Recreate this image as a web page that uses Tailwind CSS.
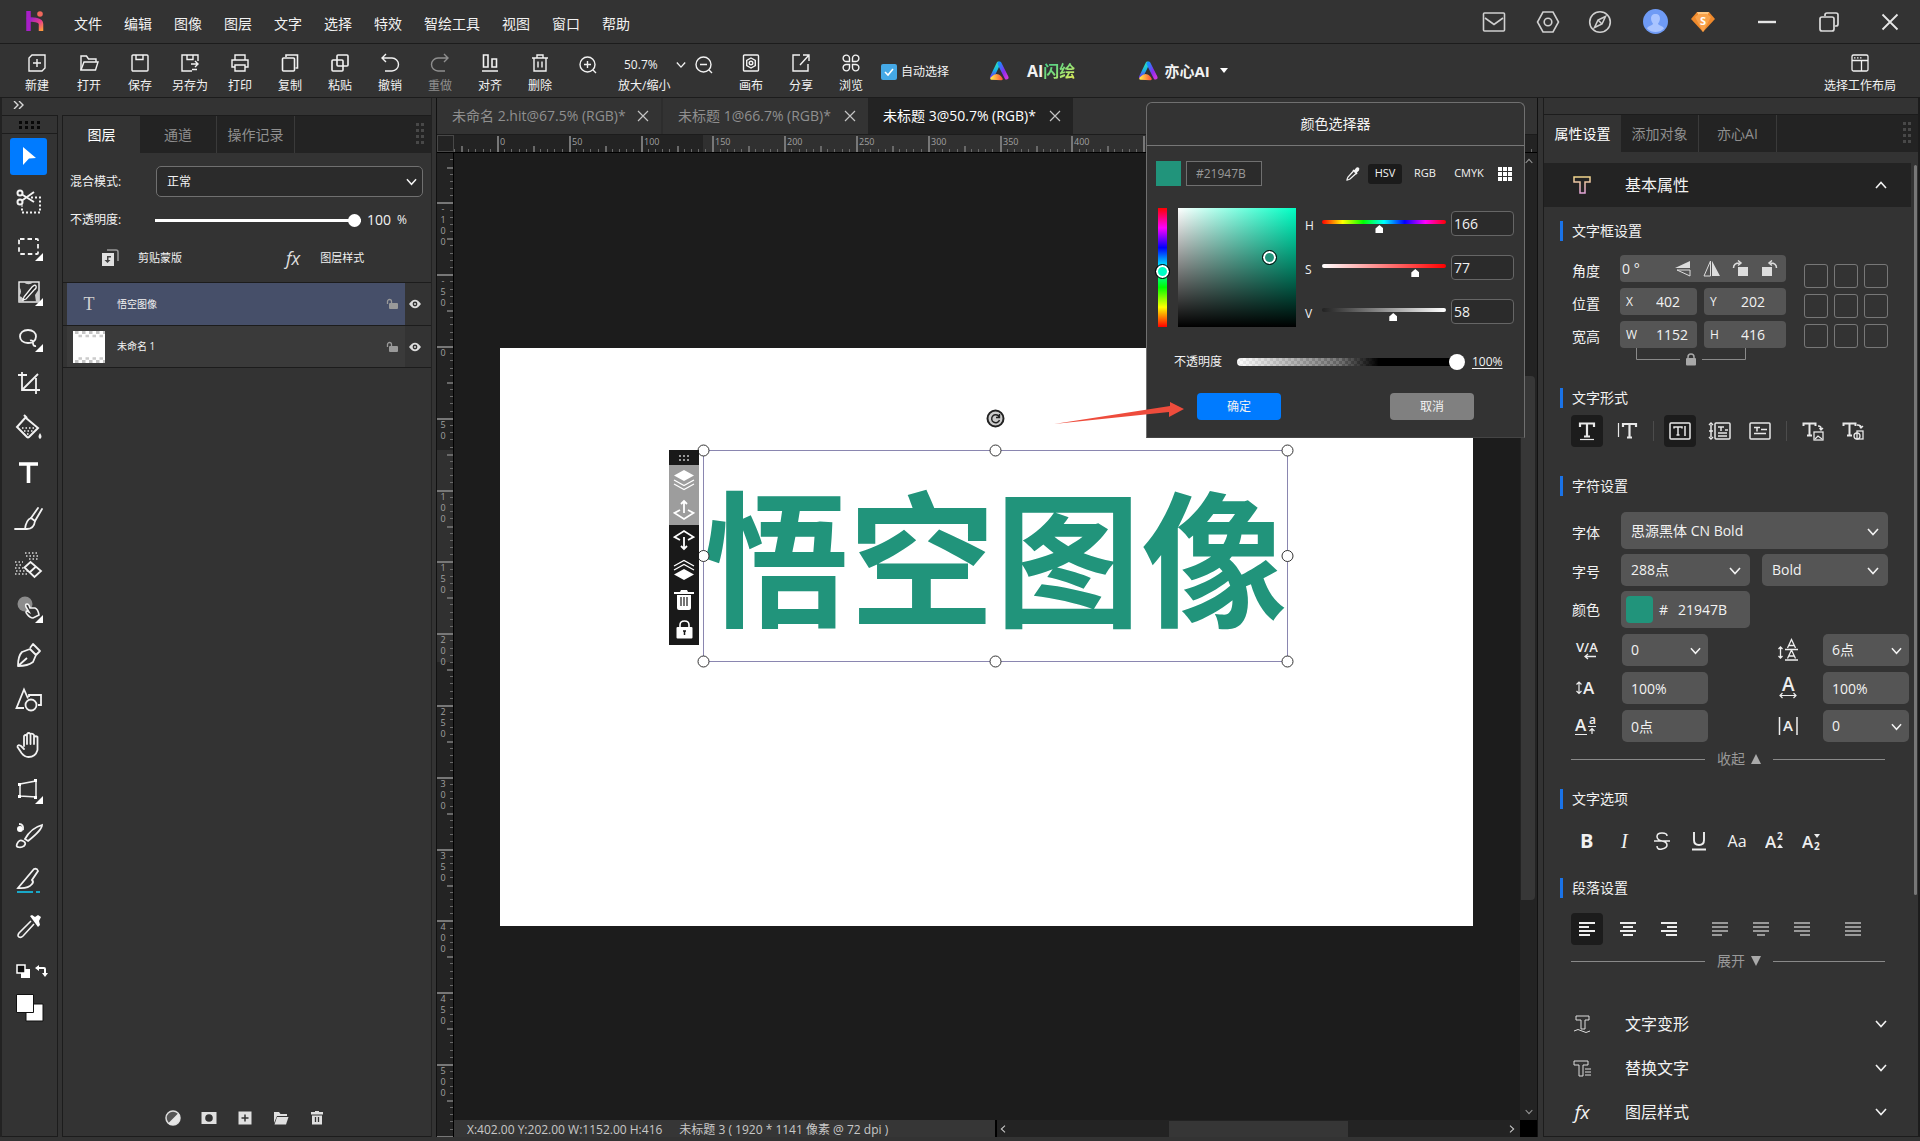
<!DOCTYPE html>
<html lang="zh-CN">
<head>
<meta charset="utf-8">
<title>未标题 3</title>
<script src="https://cdn.jsdelivr.net/npm/@tailwindcss/browser@4"></script>
</head>
<body class="flex h-screen flex-col overflow-hidden bg-[#333] font-['Open_Sans','Noto_Sans_CJK_SC',sans-serif] text-sm text-[#f2f2f2]">

<svg class="absolute h-0 w-0">
  <defs>
    <linearGradient id="ga" x1="0" y1="1" x2="0" y2="0"><stop offset="0" stop-color="#6a2ff5"/><stop offset=".5" stop-color="#18b6e8"/><stop offset="1" stop-color="#2fe0b8"/></linearGradient>
    <linearGradient id="gb" x1="0" y1="0" x2="1" y2="1"><stop offset="0" stop-color="#1590ff"/><stop offset=".6" stop-color="#8a2bf0"/><stop offset="1" stop-color="#c936e0"/></linearGradient>
    <linearGradient id="gc" x1="0" y1="0" x2="1" y2="0"><stop offset="0" stop-color="#ffe24a"/><stop offset="1" stop-color="#ff5c3c"/></linearGradient>
    <linearGradient id="gh" x1="0" y1="0" x2="1" y2="1"><stop offset="0" stop-color="#8a1fd0"/><stop offset=".55" stop-color="#e83a8c"/><stop offset="1" stop-color="#ff9a3c"/></linearGradient>
    <linearGradient id="gt" x1="0" y1="0" x2="0" y2="1"><stop offset="0" stop-color="#f0d48a"/><stop offset="1" stop-color="#e2a4d8"/></linearGradient>
  </defs>
  <symbol id="chev" viewBox="0 0 12 8"><path d="M1 1l5 5.500 5-5.500" fill="none" stroke="currentColor" stroke-width="1.600"/></symbol>
  <symbol id="x" viewBox="0 0 12 12"><path d="M1 1l10 10M11 1L1 11" fill="none" stroke="currentColor" stroke-width="1.200"/></symbol>
  <symbol id="grip" viewBox="0 0 10 24"><path d="M1 1h3v3H1zM6 1h3v3H6zM1 7h3v3H1zM6 7h3v3H6zM1 13h3v3H1zM6 13h3v3H6zM1 19h3v3H1zM6 19h3v3H6z" fill="currentColor"/></symbol>
  <symbol id="ai" viewBox="0 0 20 20">
    <path d="M9.500 2.500L3 16" stroke="url(#ga)" stroke-width="4" stroke-linecap="round"/>
    <path d="M10.500 2.500l7 14" stroke="url(#gb)" stroke-width="4" stroke-linecap="round"/>
    <path d="M2.500 17.500Q9 11 12.500 18z" stroke="url(#gc)" fill="url(#gc)" stroke-width="2.500" stroke-linejoin="round"/>
  </symbol>
  <symbol id="unlock" viewBox="0 0 12 12"><path d="M1.500 6V3.500a2 2 0 0 1 4 0V5" fill="none" stroke="currentColor" stroke-width="1.300"/><rect x="3" y="5" width="9" height="6" rx="1" fill="currentColor"/></symbol>
  <symbol id="eye" viewBox="0 0 12 10"><path d="M0 5q6-8.500 12 0q-6 8.500-12 0z" fill="currentColor"/><circle cx="6" cy="5" r="2.400" fill="#333"/><circle cx="6" cy="5" r="1" fill="currentColor"/></symbol>
</svg>

<!-- Title bar -->
<header class="flex h-11 shrink-0 items-center border-b border-[#1c1c1c] pl-6 pb-1.5">
  <svg class="mt-1 mr-[30px] h-7 w-5" viewBox="0 0 20 28"><path d="M3 13q5-1 9 0 5 1 5 4v7" fill="none" stroke="url(#gh)" stroke-width="4.500"/><path d="M4.500 4v20" stroke="#a81fc8" stroke-width="4.500"/><circle cx="16" cy="7" r="2.800" fill="#f0685c"/></svg>
  <nav class="mt-2 flex gap-[22px] pt-0.5 leading-5">
    <a href="#">文件</a><a href="#">编辑</a><a href="#">图像</a><a href="#">图层</a><a href="#">文字</a><a href="#">选择</a><a href="#">特效</a><a href="#">智绘工具</a><a href="#">视图</a><a href="#">窗口</a><a href="#">帮助</a>
  </nav>
  <div class="mt-1.5 mr-[21px] ml-auto flex items-center text-[#d0d0d0]">
    <button aria-label="消息" class="mr-[30px]"><svg class="h-6 w-6" viewBox="0 0 24 24" fill="none" stroke="currentColor" stroke-width="1.600"><rect x="1.500" y="3" width="21" height="18" rx="1"/><path d="M3 8l9 6.500L21 8"/></svg></button>
    <button aria-label="设置" class="mr-7"><svg class="h-6 w-6" viewBox="0 0 24 24" fill="none" stroke="currentColor" stroke-width="1.600"><path d="M7 2h10l5.500 10L17 22H7L1.500 12z"/><circle cx="12" cy="12" r="3.800"/></svg></button>
    <button aria-label="发现" class="mr-[31px]"><svg class="h-6 w-6" viewBox="0 0 24 24" fill="none" stroke="currentColor" stroke-width="1.600"><circle cx="12" cy="12" r="10.300"/><path d="M17.500 6.500l-3.500 7.500-7.500 3.500 3.500-7.500zM10 10l4 4"/></svg></button>
    <button aria-label="账户" class="mr-[23px]"><svg class="h-[25px] w-[25px]" viewBox="0 0 25 25"><circle cx="12.500" cy="12.500" r="12.500" fill="#6f9bf5"/><path d="M12.500 5c6 0 5 7 2.500 9.500 0 2 5 2 6 5a12 12 0 0 1-17 0c1-3 6-3 6-5C7.500 12 6.500 5 12.500 5z" fill="#a9c4ff"/></svg></button>
    <button aria-label="会员" class="mr-[42px]"><svg class="h-6 w-6" viewBox="0 0 24 24"><path d="M6 2h12l6 7-12 13L0 9z" fill="#f08a2c"/><path d="M6 2h12l-2 4H8z" fill="#ffc680"/><path d="M4 7l8 15 8-15-4-3H8z" fill="#f9a24b"/><text x="12" y="15" text-anchor="middle" font-size="11" font-weight="700" fill="#fff">S</text></svg></button>
    <button aria-label="最小化" class="mr-[42px]"><svg class="h-5 w-5" viewBox="0 0 20 20"><path d="M1 10h18" stroke="#e6e6e6" stroke-width="2.400"/></svg></button>
    <button aria-label="还原" class="mr-[42px]"><svg class="h-5 w-5" viewBox="0 0 20 20" fill="none" stroke="#dcdcdc" stroke-width="1.700"><rect x="1" y="5" width="14" height="14" rx="2"/><path d="M6 4V3q0-2 2-2h9q2 0 2 2v9q0 2-2 2h-1"/></svg></button>
    <button aria-label="关闭"><svg class="h-[18px] w-[18px] text-[#e6e6e6]"><use href="#x"/></svg></button>
  </div>
</header>

<!-- Command bar -->
<div class="flex h-[54px] shrink-0 items-start border-b border-[#1c1c1c] pt-[9px] text-xs leading-4">
  <div class="ml-3 flex [&_button]:flex [&_button]:w-[50px] [&_button]:flex-col [&_button]:items-center [&_button]:gap-[5px] [&_button]:whitespace-nowrap [&_svg]:h-5 [&_svg]:w-5">
    <button><svg viewBox="0 0 20 20" fill="none" stroke="currentColor" stroke-width="1.400"><path d="M5 2h13v13l-3 3H2V5z"/><path d="M10 6v8M6 10h8"/></svg>新建</button>
    <button class="ml-0.5"><svg viewBox="0 0 20 20" fill="none" stroke="currentColor" stroke-width="1.400"><path d="M2 17V3h5.500l2 3H17v3"/><path d="M2 17L5 9h14l-2.500 8z"/></svg>打开</button>
    <button class="ml-px"><svg viewBox="0 0 20 20" fill="none" stroke="currentColor" stroke-width="1.400"><rect x="2" y="2" width="16" height="16" rx="1"/><path d="M6 2v4.500h7V2"/></svg>保存</button>
    <button><svg viewBox="0 0 20 20" fill="none" stroke="currentColor" stroke-width="1.400"><path d="M18 8V2H2v16h10M7 2v4.500h6V2M11 11h7m-3-3l3 3-3 3M12 16.500h5"/></svg>另存为</button>
    <button><svg viewBox="0 0 20 20" fill="none" stroke="currentColor" stroke-width="1.400"><path d="M5 7V2h10v5"/><path d="M5 14H2V7h16v7h-3"/><path d="M5 12h10v6H5z"/></svg>打印</button>
    <button><svg viewBox="0 0 20 20" fill="none" stroke="currentColor" stroke-width="1.600"><rect x="2.500" y="5" width="12" height="13" rx="1"/><path d="M6 4V2h11.500v13h-2"/></svg>复制</button>
    <button><svg viewBox="0 0 20 20" fill="none" stroke="currentColor" stroke-width="1.600"><rect x="7" y="2" width="11" height="11" rx="1"/><rect x="2" y="7" width="11" height="11" rx="1"/></svg>粘贴</button>
    <button><svg viewBox="0 0 20 20" fill="none" stroke="currentColor" stroke-width="1.400"><path d="M6 1L2 5l4 4M2 5h10a6.300 6.300 0 0 1 0 13H5"/></svg>撤销</button>
    <button class="text-[#8e8e8e]"><svg viewBox="0 0 20 20" fill="none" stroke="currentColor" stroke-width="1.400"><path d="M14 1l4 4-4 4M18 5H8a6.300 6.300 0 0 0 0 13h7"/></svg>重做</button>
    <button><svg viewBox="0 0 20 20" fill="none" stroke="currentColor" stroke-width="1.600"><path d="M3.500 2h4.500v12H3.500zM12 6h4.500v8H12zM2 18h16"/></svg>对齐</button>
    <button><svg viewBox="0 0 20 20" fill="none" stroke="currentColor" stroke-width="1.400"><path d="M2 5h16M7 5V2h6v3M4 5v13h12V5M8 8.500v6M12 8.500v6"/></svg>删除</button>
  </div>
  <div class="ml-[13px] flex flex-col gap-[3px]">
    <div class="mt-0.5 flex h-5 items-center">
      <button aria-label="放大"><svg class="h-5 w-5" viewBox="0 0 20 20" fill="none" stroke="currentColor" stroke-width="1.400"><circle cx="9.500" cy="9.500" r="7.500"/><path d="M15 15l3 3M6 9.500h7M9.500 6v7"/></svg></button>
      <label class="ml-[26px] flex items-center"><input aria-label="缩放比例" value="50.7%" class="w-12 bg-transparent outline-none"><svg class="ml-1 h-2 w-2.5"><use href="#chev"/></svg></label>
      <button aria-label="缩小" class="ml-2"><svg class="h-5 w-5" viewBox="0 0 20 20" fill="none" stroke="currentColor" stroke-width="1.400"><circle cx="9.500" cy="9.500" r="7.500"/><path d="M15 15l3 3M6 9.500h7"/></svg></button>
    </div>
    <span class="ml-10">放大/缩小</span>
  </div>
  <div class="ml-3 flex [&_button]:flex [&_button]:w-[50px] [&_button]:flex-col [&_button]:items-center [&_button]:gap-[5px] [&_svg]:h-5 [&_svg]:w-5">
    <button><svg viewBox="0 0 20 20" fill="none" stroke="currentColor" stroke-width="1.400"><rect x="2.500" y="2" width="15" height="16" rx="1"/><path d="M10 5l4.300 2.500v5L10 15l-4.300-2.500v-5z"/><circle cx="10" cy="10" r="1.800"/></svg>画布</button>
    <button><svg viewBox="0 0 20 20" fill="none" stroke="currentColor" stroke-width="1.400"><path d="M9 2H2v16h15v-7M12 2h6v6M18 2l-9 10"/></svg>分享</button>
    <button><svg viewBox="0 0 20 20" fill="none" stroke="currentColor" stroke-width="1.400"><path d="M8.500 8.500H5.500a3.200 3.200 0 1 1 3-3zM11.500 8.500h3a3.200 3.200 0 1 0-3-3zM8.500 11.500H5.500a3.200 3.200 0 1 0 3 3zM11.500 11.500h3a3.200 3.200 0 1 1-3 3z"/></svg>浏览</button>
  </div>
  <label class="mt-[11px] ml-[5px] flex items-center gap-1">
    <span class="grid h-4 w-4"><input type="checkbox" checked class="col-start-1 row-start-1 h-4 w-4 appearance-none rounded-[2px] bg-[#45a9e6]"><svg class="pointer-events-none col-start-1 row-start-1 h-4 w-4" viewBox="0 0 16 16"><path d="M4 8l3 3 5-6" fill="none" stroke="#fff" stroke-width="1.600"/></svg></span>
    自动选择
  </label>
  <button class="mt-2 ml-10 flex items-center gap-[18px] text-base leading-5 font-bold"><svg class="h-5 w-5"><use href="#ai"/></svg><span class="flex">AI<span class="bg-linear-to-br from-[#35c987] via-[#7fe07a] to-[#f2ee4c] bg-clip-text text-transparent">闪绘</span></span></button>
  <button class="mt-2 ml-[63px] flex items-center gap-1.5 text-[15px] leading-5 font-bold"><svg class="h-5 w-5"><use href="#ai"/></svg>亦心AI<svg class="ml-1 h-1.5 w-2" viewBox="0 0 8 6"><path d="M0 0h8L4 5z" fill="#fff"/></svg></button>
  <button class="mr-6 ml-auto flex flex-col items-center gap-[5px]"><svg class="h-5 w-5" viewBox="0 0 20 20" fill="none" stroke="currentColor" stroke-width="1.300"><rect x="2" y="2" width="16" height="16" rx="1.500"/><path d="M2 7.500h16M11.500 7.500V18M4 4.800h1.500M7 4.800h1.500M10 4.800h1.500"/></svg>选择工作布局</button>
</div>

<main class="flex min-h-0 flex-1 pb-1">

  <!-- Tools and layers -->
  <section class="flex w-[432px] shrink-0 flex-col border-r border-l-2 border-[#222]">
    <div class="flex h-[17px] items-center pl-[11px]"><button aria-label="展开工具栏"><svg class="-mt-1 h-2 w-3" viewBox="0 0 12 8"><path d="M1 0l4 4-4 4M6 0l4 4-4 4" fill="none" stroke="#d8d8d8" stroke-width="1.400"/></svg></button></div>
    <div class="flex min-h-0 flex-1 gap-1">
      <aside class="flex w-[56px] flex-col border border-l-0 border-[#1c1c1c]">
        <div class="flex h-[18px] items-center justify-center border-b border-[#1c1c1c]"><svg class="h-2 w-[22px]" viewBox="0 0 22 8"><path d="M0 0h3v3H0zM6 0h3v3H6zM12 0h3v3h-3zM18 0h3v3h-3zM0 5h3v3H0zM6 5h3v3H6zM12 5h3v3h-3zM18 5h3v3h-3z" fill="#080808"/></svg></div>
        <div class="mt-1 flex h-[807px] flex-col items-center justify-between pr-0.5 [&>button]:grid [&>button]:h-[37px] [&>button]:w-[37px] [&>button]:place-items-center [&>button>svg]:h-[30px] [&>button>svg]:w-[30px]">
          <button aria-label="移动" class="rounded-[3px] bg-[#007bff]"><svg viewBox="0 0 30 30"><path d="M9 5l13 11-7 .5L9 23z" fill="#fff"/></svg></button>
          <button aria-label="抠图"><svg viewBox="0 0 30 30" fill="none" stroke="#f2f2f2" stroke-width="2"><circle cx="6" cy="6" r="2.500"/><circle cx="6" cy="15" r="2.500"/><path d="M8 7.500l12 7.500M8 13.500L20 5"/><path d="M17 10.500h9v15H8v-7" stroke-dasharray="2 2"/></svg></button>
          <button aria-label="选框"><svg viewBox="0 0 30 30"><rect x="5" y="7" width="19" height="15" rx="1" fill="none" stroke="#f2f2f2" stroke-width="1.800" stroke-dasharray="4.500 3"/><path d="M29 21v8h-8z" fill="#fff"/></svg></button>
          <button aria-label="调整"><svg viewBox="0 0 30 30"><rect x="5" y="5" width="20" height="20" fill="none" stroke="#f2f2f2" stroke-width="1.400"/><path d="M10 5a5 4 0 0 0 9 0zM5 10a6 6 0 0 1 0 9zM5 19q5 1 5 6H5zM25 12l-4 6 1 7h3z" fill="#ccc"/><path d="M10 20l8-10q3-3 4-1t-2 4l-8 9-3 1z" fill="#222" stroke="#f2f2f2" stroke-width="1.300"/><path d="M29 21v8h-8z" fill="#fff"/></svg></button>
          <button aria-label="套索"><svg viewBox="0 0 30 30"><path d="M18 19.500q-2 .5-4 .500c-5 0-8-3-8-6.500s3-6.500 8-6.500 8 3 8 6.500q0 3-2.500 5m-3.500-1q3-1 3 2.500t3 3" fill="none" stroke="#f2f2f2" stroke-width="1.800"/><path d="M29 21v8h-8z" fill="#fff"/></svg></button>
          <button aria-label="裁剪"><svg viewBox="0 0 30 30" fill="none" stroke="#f2f2f2" stroke-width="1.800"><path d="M4 7h9M8 4v18h18M22 10v16M8 22L24 6"/></svg></button>
          <button aria-label="填充"><svg viewBox="0 0 30 30"><path d="M12 4L3 14l10 10q1 1 2 0l9-9L12 5M10 2l3 3" fill="none" stroke="#f2f2f2" stroke-width="2"/><path d="M8 15h13M10 18h9M13 21h3" stroke="#f2f2f2" stroke-width="1.500" stroke-dasharray="1.500 2"/><path d="M26 20q3 4 0 6q-3-2 0-6z" fill="#f2f2f2"/></svg></button>
          <button aria-label="文字"><svg viewBox="0 0 30 30"><path d="M5 6h19M14.500 6v19" stroke="#fff" stroke-width="3.600"/></svg></button>
          <button aria-label="画笔"><svg viewBox="0 0 30 30" fill="none" stroke="#f2f2f2" stroke-width="1.800" stroke-linecap="round"><path d="M1 25h12q7 0 8-8l-4-3q-5 2-6 11"/><path d="M17 14l7-10M21 17l7-12"/></svg></button>
          <button aria-label="橡皮"><svg viewBox="0 0 30 30"><path d="M11 4h14M12 7h12M15 10h10M1 13h8M2 16h7M1 19h11M2 22h12M1 25h14" stroke="#d8d8d8" stroke-width="1.500" stroke-dasharray="1.500 2"/><path d="M10.500 18.500l6-5.500L27 22l-6.500 6zM21.500 18l-6 5.500" fill="#333" stroke="#f2f2f2" stroke-width="1.800"/></svg></button>
          <button aria-label="涂抹"><svg viewBox="0 0 30 30"><circle cx="11" cy="10" r="7.500" fill="#8c8c8c"/><path d="M12 13q-1-3 1-3t3 4l5 0q3 1 4 7l-6 3q-3 0-6-4-2-2 0-3l2 1z" fill="#333" stroke="#f2f2f2" stroke-width="1.600"/><path d="M29 21v8h-8z" fill="#fff"/></svg></button>
          <button aria-label="钢笔"><svg viewBox="0 0 30 30" fill="none" stroke="#f2f2f2" stroke-width="1.800" stroke-linejoin="round"><path d="M4 26q0-10 4-14l8-3 6 6-3 7q-5 4-15 4zM4 26l9-8M16 8l3-4 7 7-4 4"/></svg></button>
          <button aria-label="形状"><svg viewBox="0 0 30 30" fill="none" stroke="#f2f2f2" stroke-width="1.800"><circle cx="17" cy="20" r="5.500"/><path d="M10 23H2.500L10 4.500l4 9M15 12v-2h12v10h-3"/></svg></button>
          <button aria-label="抓手"><svg viewBox="0 0 30 30" fill="none" stroke="#f2f2f2" stroke-width="1.800" stroke-linecap="round" stroke-linejoin="round"><path d="M10 16V6q1.700-2 3 0v8M13 6V4q1.700-2 3.500 0v10M16.500 4q2-1 3.500 1v9M20 7q2-1.500 3.500 0v13q-2 7-9 7-4 0-7-4l-4-6q0-3 3.500-1L10 19"/></svg></button>
          <button aria-label="变换"><svg viewBox="0 0 30 30"><path d="M6 9l16-3v16L6 21z" fill="none" stroke="#f2f2f2" stroke-width="1.500"/><path d="M4 8h3v3H4zM20 4h3v3h-3zM20 21h3v3h-3zM4 20h3v3H4zM29 21v8h-8z" fill="#fff"/></svg></button>
          <button aria-label="修复画笔"><svg viewBox="0 0 30 30" fill="none" stroke="#f2f2f2" stroke-width="1.800"><circle cx="6" cy="8" r="3" fill="#fff" stroke="none"/><path d="M5 3q5 0 4 6"/><path d="M11 18q6-11 17-14 0 5-14 16zM3 23q2-5 6-3t1 5q-3 2-6 1-2 0-1-3z"/></svg></button>
          <button aria-label="切片"><svg viewBox="0 0 30 30" fill="none" stroke="#f2f2f2" stroke-width="1.800"><path d="M4 22L20 3q3-1 4 2l-6 9q2 2 0 4-4 5-14 4z"/><path d="M3 26h16M22 26h4" stroke="#19a8c8" stroke-width="2"/></svg></button>
          <button aria-label="吸管"><svg viewBox="0 0 30 30"><path d="M17 10L5 22q-2 3 0 4t4-1l11-12" fill="none" stroke="#f2f2f2" stroke-width="1.600"/><path d="M16 5l2-1 3 2 3-2 3 2-2 4 1 4-2 2z" fill="#fff"/></svg></button>
        </div>
        <div class="mt-[19px] ml-3.5 flex gap-1 text-white">
          <button aria-label="默认颜色"><svg class="h-[15px] w-[15px]" viewBox="0 0 15 15"><path d="M5 5h9v9H5z" fill="#fff"/><path d="M1 1h8v8H1z" fill="#111" stroke="#fff" stroke-width="1.500"/></svg></button>
          <button aria-label="交换颜色"><svg class="h-[13px] w-[13px]" viewBox="0 0 13 13"><path d="M3 3h6q1 0 1 1v5" fill="none" stroke="#fff" stroke-width="2"/><path d="M4 0v6L0 3zM7 8h6l-3 4z" fill="#fff"/></svg></button>
        </div>
        <button aria-label="前景色与背景色" class="mt-[15px] ml-3.5 h-7 w-7"><svg class="h-7 w-7" viewBox="0 0 28 28"><path d="M10 10h17v17H10z" fill="#fff" stroke="#111"/><path d="M.5.500h17v18h-17z" fill="#fff" stroke="#111"/></svg></button>
      </aside>

      <aside class="flex min-w-0 flex-1 flex-col border border-r-0 border-[#1c1c1c]">
        <div role="tablist" class="flex h-[37px] shrink-0 bg-[#232323] text-[#8f8f8f]">
          <button role="tab" class="w-[77px] bg-[#333] text-white">图层</button>
          <button role="tab" class="w-[77px] border-r border-[#3a3a3a]">通道</button>
          <button role="tab" class="w-[78px] border-r border-[#3a3a3a]">操作记录</button>
          <svg class="mt-1.5 mr-1.5 ml-auto h-6 w-2.5 text-[#484848]"><use href="#grip"/></svg>
        </div>
        <div class="mt-[13px] flex items-center pl-[7px] text-xs">
          <label for="blend" class="w-[86px]">混合模式:</label>
          <span class="relative"><select id="blend" class="h-[31px] w-[267px] appearance-none rounded-[5px] border border-[#707070] bg-[#2b2b2b] px-2.5"><option>正常</option></select><svg class="pointer-events-none absolute top-3 right-1.5 h-2 w-[11px]"><use href="#chev"/></svg></span>
        </div>
        <div class="mt-2.5 flex h-[26px] items-center pl-[7px] text-xs">
          <label for="op" class="w-[85px]">不透明度:</label>
          <input id="op" type="range" value="100" class="h-3 w-[206px] appearance-none bg-transparent [&::-webkit-slider-runnable-track]:h-[3px] [&::-webkit-slider-runnable-track]:bg-white [&::-webkit-slider-thumb]:-mt-[5px] [&::-webkit-slider-thumb]:h-[13px] [&::-webkit-slider-thumb]:w-[13px] [&::-webkit-slider-thumb]:appearance-none [&::-webkit-slider-thumb]:rounded-full [&::-webkit-slider-thumb]:bg-white">
          <input aria-label="不透明度数值" value="100" class="ml-[6px] w-[30px] bg-transparent text-sm outline-none">%
        </div>
        <div class="mt-[13px] flex h-6 items-center text-[11px]">
          <button class="ml-[38px] flex items-center gap-[19px]"><svg class="h-[18px] w-[18px]" viewBox="0 0 18 18"><path d="M6 1h9q2 0 2 2v9" fill="none" stroke="#999" stroke-width="1.500"/><rect x="1" y="4" width="12" height="13" fill="#e0e0e0"/><path d="M6 7h4v1.500H7.500V11h2L6.500 14 3.500 11H6z" fill="#444"/></svg>剪贴蒙版</button>
          <button class="ml-[104px] flex items-center gap-5"><span class="text-[18px] leading-5 text-[#ddd] italic">fx</span>图层样式</button>
        </div>
        <ul class="mt-3 border-y border-[#1c1c1c] text-[10px]">
          <li class="flex h-[43px] items-center border-b border-[#1c1c1c]">
            <div class="ml-1 flex h-full w-[338px] items-center bg-[#464f69]">
              <span class="ml-1.5 w-8 text-center font-['Liberation_Serif'] text-lg text-[#d0d0d0]">T</span><span class="ml-3 flex-1">悟空图像</span>
              <button aria-label="锁定" class="mr-[7px]"><svg class="h-3 w-3 text-[#999]"><use href="#unlock"/></svg></button>
            </div>
            <button aria-label="可见" class="ml-1"><svg class="h-2.5 w-3 text-[#ddd]"><use href="#eye"/></svg></button>
          </li>
          <li class="flex h-[41px] items-center">
            <div class="ml-1 flex h-full w-[338px] items-center bg-[#3a3a3a]">
              <svg class="ml-1.5 h-8 w-8" viewBox="0 0 32 32"><path d="M0 0h32v32H0z" fill="#fff"/><path d="M2 1.500h30M2 30.500h30" stroke="#c4c4c4" stroke-width="3" stroke-dasharray="3.500 3.500"/><path d="M5.500 5h26.500M5.500 27.500h26.500" stroke="#ccc" stroke-width="2.500" stroke-dasharray="3.500 3.500"/></svg>
              <span class="ml-3 flex-1">未命名 1</span>
              <button aria-label="锁定" class="mr-[7px]"><svg class="h-3 w-3 text-[#999]"><use href="#unlock"/></svg></button>
            </div>
            <button aria-label="可见" class="ml-1"><svg class="h-2.5 w-3 text-[#ddd]"><use href="#eye"/></svg></button>
          </li>
        </ul>
        <div class="mt-auto mr-1 mb-2.5 flex justify-center gap-5 [&_svg]:h-4 [&_svg]:w-4">
          <button aria-label="调整图层"><svg viewBox="0 0 16 16"><circle cx="8" cy="8" r="7" fill="#555" stroke="#ddd" stroke-width="1.500"/><path d="M13.500 3A7.500 7.500 0 0 1 3 13.500z" fill="#e6e6e6"/></svg></button>
          <button aria-label="蒙版"><svg viewBox="0 0 16 16"><path d="M.5 2h15v12H.5z" fill="#e0e0e0"/><circle cx="8" cy="8" r="3.800" fill="#333"/></svg></button>
          <button aria-label="新建图层"><svg viewBox="0 0 16 16"><path d="M1.500 1.500h13v13h-13z" fill="#e0e0e0"/><path d="M8 4.500v7M4.500 8h7" stroke="#333" stroke-width="1.500"/></svg></button>
          <button aria-label="新建组"><svg viewBox="0 0 16 16"><path d="M1 13V2h5l1.500 2H14v2H4z" fill="#e0e0e0"/><path d="M4 7h11.500L13 14.500H1.500z" fill="#e0e0e0"/></svg></button>
          <button aria-label="删除图层"><svg viewBox="0 0 16 16"><path d="M2 2h4V1h4v1h4v2.500H2zM3 5.500h10v9H3z" fill="#e0e0e0"/><path d="M6.500 7v5M9.500 7v5" stroke="#333" stroke-width="1.300"/></svg></button>
        </div>
      </aside>
    </div>
  </section>

  <!-- Document workspace -->
  <section class="relative ml-1 flex min-w-0 flex-1 flex-col border-x border-[#111]">
    <div role="tablist" class="flex h-9 shrink-0 text-[#8f8f8f] [&>div]:flex [&>div]:items-center [&>div]:justify-between [&>div]:pr-3 [&_svg]:h-3 [&_svg]:w-3">
      <div class="w-[226px] border-r-2 border-[#2d2d2d] pl-[15px]"><button role="tab">未命名 2.hit@67.5% (RGB)*</button><button aria-label="关闭标签" class="text-[#c4c4c4]"><svg><use href="#x"/></svg></button></div>
      <div class="w-[205px] pl-[15px]"><button role="tab">未标题 1@66.7% (RGB)*</button><button aria-label="关闭标签" class="text-[#c4c4c4]"><svg><use href="#x"/></svg></button></div>
      <div class="w-[205px] bg-[#232323] pl-[15px] text-white"><button role="tab">未标题 3@50.7% (RGB)*</button><button aria-label="关闭标签" class="text-[#c4c4c4]"><svg><use href="#x"/></svg></button></div>
    </div>
    <div class="flex h-[19px] shrink-0 border-y border-t-[#1c1c1c] border-b-black bg-[#232323]">
      <div class="w-[17px] shrink-0 border border-[#484848]"></div>
      <svg id="hruler" class="h-[17px] min-w-0 flex-1 font-['Open_Sans']"></svg>
    </div>
    <div class="flex min-h-0 flex-1">
      <svg id="vruler" class="h-full w-[17px] shrink-0 border-r border-black bg-[#232323] font-['Open_Sans']"></svg>
      <div class="flex min-w-0 flex-1 flex-col">
        <div class="flex min-h-0 flex-1">
          <div class="relative min-w-0 flex-1 overflow-hidden bg-[#1c1c1c]">
            <div class="absolute top-[195px] left-[46px] h-[578px] w-[973px] bg-white">
              <div class="absolute top-[98px] left-[203px] h-[211px] w-[584px] font-['Noto_Sans_CJK_SC'] text-[146px] leading-[211px] font-bold whitespace-nowrap text-[#21947b]">悟空图像</div>
              <svg class="absolute top-[60px] left-[193px] h-[264px] w-[604px]" viewBox="0 0 604 264" fill="#fff" stroke="#333">
                <rect x="10.500" y="42.500" width="584" height="211" fill="none" stroke="#8a86b0"/>
                <circle cx="10.500" cy="42.500" r="5.500"/><circle cx="302.500" cy="42.500" r="5.500"/><circle cx="594.500" cy="42.500" r="5.500"/>
                <circle cx="10.500" cy="148" r="5.500"/><circle cx="594.500" cy="148" r="5.500"/>
                <circle cx="10.500" cy="253.500" r="5.500"/><circle cx="302.500" cy="253.500" r="5.500"/><circle cx="594.500" cy="253.500" r="5.500"/>
                <circle cx="302.500" cy="10.500" r="8" fill="#ccc" stroke="#222" stroke-width="2"/><path d="M306 8.500a4 4 0 1 0 .5 3.500M306.500 6v3.500h-3.500" fill="none" stroke="#222" stroke-width="1.400"/>
              </svg>
              <div class="absolute top-[102px] left-[169px] flex w-[30px] flex-col bg-[#191919] [&_button]:grid [&_button]:h-[30px] [&_button]:place-items-center [&_button_svg]:h-[22px] [&_button_svg]:w-[22px]">
                <svg class="h-[15px] w-[30px]" viewBox="0 0 30 15"><path d="M10 5h2v2h-2zM14 5h2v2h-2zM18 5h2v2h-2zM10 9h2v2h-2zM14 9h2v2h-2zM18 9h2v2h-2z" fill="#999"/></svg>
                <button aria-label="置顶" class="bg-[#9d9d9d]"><svg viewBox="0 0 22 22" fill="none" stroke="#fff" stroke-width="1.300"><path d="M11 1l10 5.500-10 5.500L1 6.500z" fill="#fff" stroke="none"/><path d="M1 11l10 5.500L21 11M1 15l10 5.500L21 15"/></svg></button>
                <button aria-label="上移一层" class="bg-[#9d9d9d]"><svg viewBox="0 0 22 22" fill="none" stroke="#fff" stroke-width="1.800"><path d="M11 14V2M8 5l3-3 3 3M7 11l-5.500 3L11 20l9.500-6L15 11"/></svg></button>
                <button aria-label="下移一层"><svg viewBox="0 0 22 22" fill="none" stroke="#fff" stroke-width="1.800"><path d="M11 8v12M8 17l3 3 3-3M7 11L1.500 8 11 2l9.500 6L15 11"/></svg></button>
                <button aria-label="置底"><svg viewBox="0 0 22 22" fill="none" stroke="#fff" stroke-width="1.300"><path d="M11 10l10 5.500L11 21 1 15.500z" fill="#fff" stroke="none"/><path d="M1 7l10-5.500L21 7M1 11l10-5.500L21 11"/></svg></button>
                <button aria-label="删除"><svg viewBox="0 0 22 22"><path d="M1 3h6l1-2h6l1 2h6v2H1zM4 6h14v13q0 2-2 2H6q-2 0-2-2z" fill="#fff"/><path d="M8 8v9M11 8v9M14 8v9" stroke="#191919" stroke-width="1.200"/></svg></button>
                <button aria-label="锁定"><svg viewBox="0 0 22 22"><path d="M7 9V6q0-4 4.500-4T16 6v3" fill="none" stroke="#fff" stroke-width="1.600"/><rect x="3.500" y="8" width="16" height="11.500" rx="1" fill="#fff"/><path d="M11.500 12v4M10 12h3" stroke="#191919" stroke-width="1.500"/></svg></button>
              </div>
            </div>
          </div>
          <div class="flex w-[17px] shrink-0 flex-col items-center bg-[#232323] text-[#999]">
            <svg class="mt-1 h-2 w-2 rotate-180"><use href="#chev"/></svg>
            <div class="mt-[211px] mr-0.5 h-[524px] w-3.5 rounded-r-sm bg-[#373737]"></div>
            <svg class="mt-auto mb-1 h-2 w-2"><use href="#chev"/></svg>
          </div>
        </div>
        <div class="flex h-[17px] shrink-0 text-xs leading-[17px] text-[#c8c8c8]">
          <div class="flex w-[541px] gap-[17px] bg-[#363636] pt-px pl-[13px]"><span>X:402.00 Y:202.00 W:1152.00 H:416</span><span>未标题 3 ( 1920 * 1141 像素 @ 72 dpi )</span></div>
          <div class="flex min-w-0 flex-1 items-center border-l-2 border-black bg-[#232323]">
            <svg class="ml-0.5 h-2 w-2 rotate-90"><use href="#chev"/></svg>
            <div class="ml-[162px] h-4 w-[179px] bg-[#363636]"></div>
            <svg class="mr-1 ml-auto h-2 w-2 -rotate-90"><use href="#chev"/></svg>
          </div>
          <div class="w-[17px] bg-black"></div>
        </div>
      </div>
    </div>

    <!-- Colour picker -->
    <div role="dialog" aria-label="颜色选择器" class="absolute top-1 right-3 flex h-[336px] w-[379px] flex-col rounded-t-md border border-[#707070] border-b-[#444] bg-[#333]">
      <h2 class="flex h-[43px] shrink-0 items-center justify-center border-b border-[#777]">颜色选择器</h2>
      <div class="mt-[15px] flex h-[25px] items-center pl-[9px] text-xs">
        <span class="h-[25px] w-[25px] bg-[#21947b]"></span>
        <input aria-label="十六进制颜色" value="#21947B" class="ml-[5px] h-[25px] w-[76px] border border-[#707070] bg-[#2b2b2b] px-[9px] text-[#999]">
        <button aria-label="取色" class="ml-[84px]"><svg class="h-3.5 w-3.5" viewBox="0 0 14 14"><path d="M7.500 4L2 10q-1 2-1 3 1 0 3-1l6-5.500" fill="none" stroke="#f2f2f2" stroke-width="1.300"/><path d="M6.500 3.500l4 4 1-1-.5-1 2-2Q14 1 12.500.500t-2.500.500L8.500 3l-1-.5z" fill="#f2f2f2"/></svg></button>
        <button class="ml-2 h-5 w-[34px] rounded-[3px] bg-[#1b1b1b] text-[11px]">HSV</button>
        <button class="ml-[11px] w-6 text-[11px]">RGB</button>
        <button class="ml-3.5 w-9 text-[11px]">CMYK</button>
        <button aria-label="色板" class="ml-[11px]"><svg class="h-3.5 w-3.5" viewBox="0 0 14 14"><path d="M0 0h4v4H0zM5 0h4v4H5zM10 0h4v4h-4zM0 5h4v4H0zM5 5h4v4H5zM10 5h4v4h-4zM0 10h4v4H0zM5 10h4v4H5zM10 10h4v4h-4z" fill="#fff"/></svg></button>
      </div>
      <div class="mt-[22px] flex h-[119px] pl-[11px]">
        <div class="relative w-[9px] bg-[linear-gradient(red,magenta,blue,cyan,lime,yellow,red)]"><span class="absolute top-[57px] -left-0.5 h-[13px] w-[13px] rounded-full border-2 border-white bg-[#00ffc4] outline outline-black"></span></div>
        <div class="relative ml-[11px] w-[118px] bg-[linear-gradient(transparent,black),linear-gradient(to_right,white,#00ffc4)]"><span class="absolute top-[43px] left-[85px] h-[13px] w-[13px] rounded-full border-2 border-white bg-[#21947b] outline outline-black"></span></div>
        <div class="ml-[9px] flex flex-col gap-[19px] text-sm [&>label]:flex [&>label]:h-[25px] [&>label]:items-start [&_span]:w-[17px] [&_span]:pt-[5px] [&_span]:text-xs [&_span]:leading-5 [&_[type=range]]:mt-[9px] [&_[type=range]]:h-1 [&_[type=range]]:w-[124px] [&_[type=range]]:appearance-none [&_[type=range]]:rounded-sm [&_[type=range]::-webkit-slider-thumb]:mt-3.5 [&_[type=range]::-webkit-slider-thumb]:h-2 [&_[type=range]::-webkit-slider-thumb]:w-2 [&_[type=range]::-webkit-slider-thumb]:appearance-none [&_[type=range]::-webkit-slider-thumb]:bg-white [&_[type=range]::-webkit-slider-thumb]:[clip-path:polygon(50%_0,100%_45%,100%_100%,0_100%,0_45%)]">
          <label class="mt-[3px]"><span>H</span><input type="range" max="360" value="166" class="bg-[linear-gradient(to_right,red,yellow,lime,cyan,blue,magenta,red)]"><input aria-label="H 值" value="166" class="ml-[5px] h-[25px] w-[63px] rounded border border-[#666] bg-[#2b2b2b] px-0.5"></label>
          <label><span>S</span><input type="range" value="77" class="bg-[linear-gradient(to_right,white,red)]"><input aria-label="S 值" value="77" class="ml-[5px] h-[25px] w-[63px] rounded border border-[#666] bg-[#2b2b2b] px-0.5"></label>
          <label><span>V</span><input type="range" value="58" class="bg-[linear-gradient(to_right,#222,white)]"><input aria-label="V 值" value="58" class="ml-[5px] h-[25px] w-[63px] rounded border border-[#666] bg-[#2b2b2b] px-0.5"></label>
        </div>
      </div>
      <div class="mt-[25px] flex h-5 items-center pl-[27px] text-xs">
        <label for="alpha" class="w-[63px]">不透明度</label>
        <input id="alpha" type="range" value="100" class="h-2 w-[228px] appearance-none rounded-full bg-[linear-gradient(to_right,#ffffffbb,#00000088_45%,black_62%),repeating-conic-gradient(#ccc_0_25%,white_0_50%)] bg-[size:auto,6px_6px] [&::-webkit-slider-thumb]:h-4 [&::-webkit-slider-thumb]:w-4 [&::-webkit-slider-thumb]:appearance-none [&::-webkit-slider-thumb]:rounded-full [&::-webkit-slider-thumb]:bg-white">
        <button class="ml-[7px] underline underline-offset-2">100%</button>
      </div>
      <div class="mt-[21px] flex justify-between pr-[50px] pl-[50px] text-xs">
        <button class="h-[27px] w-[84px] rounded bg-[#007bff]">确定</button>
        <button class="h-[27px] w-[84px] rounded bg-[#808080]">取消</button>
      </div>
    </div>

    <!-- Pointer to the confirm button -->
    <svg class="pointer-events-none absolute top-[302px] right-[352px] h-7 w-[132px]" viewBox="0 0 132 28"><path d="M1 24L117 6V2l14 7-15 8v-5z" fill="#ee4c3c"/></svg>
  </section>

  <!-- Properties -->
  <section class="ml-[5px] flex w-[377px] shrink-0 flex-col border-r-2 border-b border-l border-[#1c1c1c]">
    <div class="h-[17px] shrink-0 border-b border-[#1c1c1c]"></div>
    <div role="tablist" class="flex h-[37px] shrink-0 bg-[#232323] text-[#8f8f8f]">
      <button role="tab" class="w-[77px] bg-[#333] text-white">属性设置</button>
      <button role="tab" class="w-[78px] border-r border-[#3a3a3a]">添加对象</button>
      <button role="tab" class="w-[78px] border-r border-[#3a3a3a]">亦心AI</button>
      <svg class="mt-1.5 mr-1.5 ml-auto h-6 w-2.5 text-[#484848]"><use href="#grip"/></svg>
    </div>
    <div class="mt-[11px] flex min-h-0 flex-1 justify-between">
      <div class="w-[367px]">
        <button class="flex h-11 w-full items-center bg-[#232323] pr-6 pl-[29px] text-base"><svg class="h-[18px] w-[18px]" viewBox="0 0 18 18"><path d="M1 1h16v5h-5v11H7V6H1z" fill="none" stroke="url(#gt)" stroke-width="1.500"/></svg><span class="ml-[34px] flex-1 text-left">基本属性</span><svg class="h-2 w-3 rotate-180"><use href="#chev"/></svg></button>

        <h3 class="mt-3.5 ml-4 flex h-5 items-center border-l-[3px] border-[#1a73e8] pl-[9px]">文字框设置</h3>
        <div class="mt-3.5 ml-7 flex">
          <div class="flex flex-col gap-1.5 [&_input]:bg-transparent [&_input]:outline-none">
            <div class="flex h-[27px] items-center"><label for="ang" class="w-12 pt-1">角度</label>
              <div class="flex h-[27px] w-[166px] items-center gap-3 rounded bg-[#555] pr-1.5 [&_svg]:h-[17px] [&_svg]:w-[17px]"><input id="ang" value="0 °" class="w-[42px] flex-none pl-0.5">
                <button aria-label="垂直翻转"><svg viewBox="0 0 17 17"><path d="M16 1v7H1z" fill="#ddd"/><path d="M16 16v-6H3z" fill="none" stroke="#ddd"/></svg></button>
                <button aria-label="水平翻转"><svg viewBox="0 0 17 17"><path d="M7.500 1v15H1z" fill="none" stroke="#ddd"/><path d="M9 1v15h8z" fill="#ddd"/></svg></button>
                <button aria-label="顺时针旋转"><svg viewBox="0 0 17 17"><path d="M6 7h10v9H6z" fill="#ddd"/><path d="M1.500 8q0-5 6-5M6 .500L9 3 6 5.500" fill="none" stroke="#ddd" stroke-width="1.500"/></svg></button>
                <button aria-label="逆时针旋转"><svg viewBox="0 0 17 17"><path d="M1 7h10v9H1z" fill="#ddd"/><path d="M15.500 8q0-5-6-5M11 .500L8 3l3 2.500" fill="none" stroke="#ddd" stroke-width="1.500"/></svg></button>
              </div></div>
            <div class="flex h-[27px] items-center"><span class="w-12 pt-1">位置</span>
              <label class="flex h-[27px] w-[77px] items-center rounded bg-[#555] pl-1.5 text-xs">X<input value="402" class="ml-auto w-[41px] text-sm"></label>
              <label class="ml-[7px] flex h-[27px] w-[82px] items-center rounded bg-[#555] pl-1.5 text-xs">Y<input value="202" class="ml-auto w-[45px] text-sm"></label></div>
            <div class="flex h-[27px] items-center"><span class="w-12 pt-1">宽高</span>
              <label class="flex h-[27px] w-[77px] items-center rounded bg-[#555] pl-1.5 text-xs">W<input value="1152" class="ml-auto w-[41px] text-sm"></label>
              <label class="ml-[7px] flex h-[27px] w-[82px] items-center rounded bg-[#555] pl-1.5 text-xs">H<input value="416" class="ml-auto w-[45px] text-sm"></label></div>
          </div>
          <div class="mt-[9px] ml-[18px] grid h-[84px] grid-cols-3 gap-[6px] [&_button]:h-6 [&_button]:w-6 [&_button]:rounded-[3px] [&_button]:border [&_button]:border-[#777]">
            <button aria-label="左上"></button><button aria-label="上"></button><button aria-label="右上"></button><button aria-label="左"></button><button aria-label="中"></button><button aria-label="右"></button><button aria-label="左下"></button><button aria-label="下"></button><button aria-label="右下"></button>
          </div>
        </div>
        <button aria-label="锁定比例" class="ml-[92px] block h-[18px]"><svg class="h-[18px] w-[110px]" viewBox="0 0 110 18"><path d="M.5 0v11.500H44M66 11.500h43.500V0" fill="none" stroke="#8a8a8a"/><path d="M52 11V9a3 3 0 0 1 6 0v2" fill="none" stroke="#a8a8a8" stroke-width="1.500"/><rect x="50" y="10" width="10" height="7.500" rx="1" fill="#a8a8a8"/></svg></button>

        <h3 class="mt-[22px] ml-4 flex h-5 items-center border-l-[3px] border-[#1a73e8] pl-[9px]">文字形式</h3>
        <div class="mt-[7px] ml-[27px] flex items-center gap-2 [&_button]:grid [&_button]:h-8 [&_button]:w-8 [&_button]:place-items-center [&_button]:rounded [&_svg]:h-6 [&_svg]:w-6">
          <button aria-label="横排" class="bg-[#1c1c1c]"><svg viewBox="0 0 24 24" stroke="#e8e8e8" fill="none"><path d="M5 8V4.500h14V8M12 4.500V17M9 17.500h6" stroke-width="2.200"/><path d="M5 20.500h14" stroke-width="1.200"/></svg></button>
          <button aria-label="竖排"><svg viewBox="0 0 24 24" stroke="#e8e8e8" fill="none"><path d="M8 8V5h13v3M14.500 5v13M12 18.500h5" stroke-width="2.200"/><path d="M3.500 4v14" stroke-width="1.200"/></svg></button>
          <span class="mx-0.5 h-5 w-px bg-[#4c4c4c]"></span>
          <button aria-label="点文字" class="bg-[#1c1c1c]"><svg viewBox="0 0 24 24" stroke="#e8e8e8" fill="none" stroke-width="1.500"><rect x="2" y="4" width="20" height="16" rx="1"/><path d="M6 9.500V8h8v1.500M10 8v8M8.500 16h3M17 7v10"/></svg></button>
          <button aria-label="区域文字"><svg viewBox="0 0 24 24" stroke="#e8e8e8" fill="none" stroke-width="1.500"><rect x="7" y="4" width="15" height="16" rx="1"/><path d="M10 8h6M13 8v4M17 11h3M10 14h9M10 17h9M3 6v12M1 6l2-2 2 2M1 18l2 2 2-2M1 12h4"/></svg></button>
          <button aria-label="固定文字"><svg viewBox="0 0 24 24" stroke="#e8e8e8" fill="none" stroke-width="1.500"><rect x="2" y="4" width="20" height="16" rx="1"/><path d="M6 8.500h6M9 8.500v4M13 10.500h6M6 14.500h12"/></svg></button>
          <span class="mx-0.5 h-5 w-px bg-[#4c4c4c]"></span>
          <button aria-label="转为图片"><svg viewBox="0 0 24 24" stroke="#e8e8e8" fill="none" stroke-width="1.300"><path d="M2.500 7V4.500h12V7M8.500 4.500V16M6 16.500h5" stroke-width="2"/><rect x="13" y="13" width="9" height="8"/><path d="M14 20l3-3 4 3M17 7q4 0 3 4M18.500 9l1.500 2 2-2"/></svg></button>
          <button aria-label="转为形状"><svg viewBox="0 0 24 24" stroke="#e8e8e8" fill="none" stroke-width="1.300"><path d="M2.500 7V4.500h12V7M8.500 4.500V16M6 16.500h5" stroke-width="2"/><rect x="16" y="12" width="6" height="8"/><circle cx="16" cy="17" r="3"/><path d="M16 6q5 0 4 3M18.500 7l1.500 2 2-2"/></svg></button>
        </div>

        <h3 class="mt-[29px] ml-4 flex h-5 items-center border-l-[3px] border-[#1a73e8] pl-[9px]">字符设置</h3>
        <div class="mt-4 ml-7 flex flex-col gap-[5px] [&_select]:appearance-none [&_select]:rounded-[5px] [&_select]:bg-[#555] [&_select]:pl-2.5 [&_span]:relative [&_span>svg]:pointer-events-none [&_span>svg]:absolute [&_span>svg]:right-[9px] [&_span>svg]:h-2 [&_span>svg]:w-3">
          <div class="flex items-center"><label for="font" class="w-[49px] pt-1">字体</label><span><select id="font" class="block h-[37px] w-[267px]"><option>思源黑体 CN Bold</option></select><svg class="top-4"><use href="#chev"/></svg></span></div>
          <div class="flex items-center"><label for="size" class="w-[49px] pt-1">字号</label><span><select id="size" class="block h-8 w-[129px]"><option>288点</option></select><svg class="top-[13px]"><use href="#chev"/></svg></span><span class="ml-3"><select aria-label="字重" class="block h-8 w-[126px]"><option>Bold</option></select><svg class="top-[13px]"><use href="#chev"/></svg></span></div>
          <div class="flex items-center"><label for="col" class="w-[49px]">颜色</label><div class="flex h-[37px] w-[129px] items-center rounded-[5px] bg-[#555] pl-[5px]"><button aria-label="文字颜色" class="h-[27px] w-[27px] rounded bg-[#21947b]"></button><b class="ml-1.5 font-normal">#</b><input id="col" value="21947B" class="ml-2.5 w-14 bg-transparent outline-none"></div></div>
        </div>
        <div class="mt-1.5 ml-[30px] grid grid-cols-[48px_86px_115px_86px] items-center gap-y-1.5 [&_.f]:h-8 [&_.f]:w-full [&_.f]:appearance-none [&_.f]:rounded-[5px] [&_.f]:bg-[#555] [&_.f]:pl-[9px] [&>span]:relative [&>span>svg]:pointer-events-none [&>span>svg]:absolute [&>span>svg]:top-[13px] [&>span>svg]:right-[7px] [&>span>svg]:h-2 [&>span>svg]:w-[11px] [&>svg]:h-6 [&>svg]:w-6 [&>svg:nth-child(4n+3)]:ml-[68px]">
          <svg viewBox="0 0 24 24" fill="#eee" stroke="#eee"><text x="2" y="14" font-size="13" font-weight="600" stroke="none">V/A</text><path d="M11 18.500h11M14 16l-3 2.500 3 2.500" fill="none" stroke-width="1.300"/></svg>
          <span><select aria-label="字间距" class="f"><option>0</option></select><svg><use href="#chev"/></svg></span>
          <svg viewBox="0 0 24 24" fill="none" stroke="#eee" stroke-width="1.300"><path d="M11.500 10l4-8.500 4 8.500M13 7.500h5M11.500 20.500l4-8.500 4 8.500M13 18h5M9 11.500h13M9 22h13M4.500 9v11M2.500 11l2-2 2 2M2.500 18l2 2 2-2"/></svg>
          <span><select aria-label="行距" class="f"><option>6点</option></select><svg><use href="#chev"/></svg></span>
          <svg viewBox="0 0 24 24" fill="#eee" stroke="#eee"><text x="9" y="18" font-size="17" font-weight="600" stroke="none">A</text><path d="M5 6v11M2.500 8.500L5 6l2.500 2.500M2.500 15L5 17.500 7.500 15" fill="none" stroke-width="1.200"/></svg>
          <input aria-label="垂直缩放" value="100%" class="f">
          <svg viewBox="0 0 24 24" fill="#eee" stroke="#eee"><text x="6" y="15" font-size="19" font-weight="600" stroke="none">A</text><path d="M4 19.500h16M6.500 17L4 19.500 6.500 22M17.500 17l2.500 2.500-2.500 2.500" fill="none" stroke-width="1.200"/></svg>
          <input aria-label="水平缩放" value="100%" class="f">
          <svg viewBox="0 0 24 24" fill="#eee" stroke="#eee"><text x="1" y="17" font-size="17" font-weight="600" stroke="none">A</text><text x="15" y="10" font-size="12" font-weight="600" stroke="none">a</text><path d="M1 20.500h12M14 12.500h8M18 20v-5M15.500 17l2.500-2.500 2.500 2.500" fill="none" stroke-width="1.200"/></svg>
          <input aria-label="基线偏移" value="0点" class="f">
          <svg viewBox="0 0 24 24" fill="#eee" stroke="#eee"><text x="7" y="17" font-size="15" font-weight="600" stroke="none">A</text><path d="M3.500 3v18M21 3v18" stroke-width="1.500"/></svg>
          <span><select aria-label="比例间距" class="f"><option>0</option></select><svg><use href="#chev"/></svg></span>
        </div>
        <button class="mt-[7px] ml-[27px] flex h-5 w-[314px] items-center gap-3 text-[#999]"><i class="h-px w-[134px] bg-[#8a8a8a]"></i><span class="flex items-center gap-1.5">收起<svg class="h-2.5 w-2.5" viewBox="0 0 10 10"><path d="M5 0l5 10H0z" fill="#aaa"/></svg></span><i class="h-px flex-1 bg-[#8a8a8a]"></i></button>

        <h3 class="mt-5 ml-4 flex h-5 items-center border-l-[3px] border-[#1a73e8] pl-[9px]">文字选项</h3>
        <div class="mt-4 ml-6 grid h-8 w-[263px] grid-cols-7 place-items-center text-[17px] leading-5">
          <button aria-label="加粗" class="text-xl font-bold">B</button>
          <button aria-label="倾斜" class="font-['Liberation_Serif'] text-xl italic">I</button>
          <button aria-label="删除线"><svg class="h-5 w-5" viewBox="0 0 20 20" fill="none" stroke="#eee" stroke-width="1.500"><path d="M15 5q0-3-5-3T5 5.500 10 10t5 4-5 4-5-3M2 10h16"/></svg></button>
          <button aria-label="下划线"><svg class="h-5 w-5" viewBox="0 0 20 20" fill="none" stroke="#eee" stroke-width="1.900"><path d="M5 1v8q0 5 5 5t5-5V1M3 18.500h14"/></svg></button>
          <button class="text-base font-medium">Aa</button>
          <button aria-label="上标"><svg class="h-5 w-5" viewBox="0 0 20 20" fill="#eee"><text x="0" y="17" font-size="17" font-weight="600">A</text><text x="12" y="9" font-size="10" font-weight="700">2</text><path d="M12 17l3-4 3 4z"/></svg></button>
          <button aria-label="下标"><svg class="h-5 w-5" viewBox="0 0 20 20" fill="#eee"><text x="0" y="17" font-size="17" font-weight="600">A</text><text x="12" y="19" font-size="10" font-weight="700">2</text><path d="M12 3h6l-3 4z"/></svg></button>
        </div>

        <h3 class="mt-[21px] ml-4 flex h-5 items-center border-l-[3px] border-[#1a73e8] pl-[9px]">段落设置</h3>
        <div class="mt-[15px] ml-[27px] flex gap-[9px] text-[#999] [&_button]:grid [&_button]:h-8 [&_button]:w-8 [&_button]:place-items-center [&_button]:rounded [&_svg]:h-4 [&_svg]:w-4 [&_svg]:stroke-current [&_svg]:stroke-2">
          <button aria-label="左对齐" class="bg-[#1c1c1c] text-[#eee]"><svg viewBox="0 0 16 16"><path d="M0 2h16M0 6h10M0 10h16M0 14h11"/></svg></button>
          <button aria-label="居中" class="text-[#eee]"><svg viewBox="0 0 16 16"><path d="M0 2h16M3 6h10M0 10h16M3 14h10"/></svg></button>
          <button aria-label="右对齐" class="text-[#eee]"><svg viewBox="0 0 16 16"><path d="M0 2h16M6 6h10M0 10h16M5 14h11"/></svg></button>
          <button aria-label="末行左对齐" class="ml-2.5"><svg viewBox="0 0 16 16"><path d="M0 2h16M0 6h16M0 10h16M0 14h10"/></svg></button>
          <button aria-label="末行居中"><svg viewBox="0 0 16 16"><path d="M0 2h16M0 6h16M0 10h16M4 14h8"/></svg></button>
          <button aria-label="末行右对齐"><svg viewBox="0 0 16 16"><path d="M0 2h16M0 6h16M0 10h16M6 14h10"/></svg></button>
          <button aria-label="两端对齐" class="ml-2.5"><svg viewBox="0 0 16 16"><path d="M0 2h16M0 6h16M0 10h16M0 14h16"/></svg></button>
        </div>
        <button class="mt-1.5 ml-[27px] flex h-5 w-[314px] items-center gap-3 text-[#999]"><i class="h-px w-[134px] bg-[#8a8a8a]"></i><span class="flex items-center gap-1.5">展开<svg class="h-2.5 w-2.5" viewBox="0 0 10 10"><path d="M0 0h10L5 10z" fill="#aaa"/></svg></span><i class="h-px flex-1 bg-[#8a8a8a]"></i></button>

        <div class="mt-[31px] [&_button]:flex [&_button]:h-11 [&_button]:w-full [&_button]:items-center [&_button]:pr-6 [&_button]:pl-[29px] [&_button]:text-base">
          <button><svg class="h-[19px] w-[18px]" viewBox="0 0 18 19" fill="none" stroke="#ddd"><path d="M3 1h13v4h-4v9H8V5H3zM1 16q4-3 8 0t8 0"/></svg><span class="ml-[34px] flex-1 text-left">文字变形</span><svg class="h-2 w-3"><use href="#chev"/></svg></button>
          <button><svg class="h-[19px] w-[18px]" viewBox="0 0 18 19" fill="none" stroke="#ddd"><path d="M1 2h14v4h-5v11H6V6H1zM12 10h6M12 13h6M12 16h6"/></svg><span class="ml-[34px] flex-1 text-left">替换文字</span><svg class="h-2 w-3"><use href="#chev"/></svg></button>
          <button><b class="w-[18px] text-[19px] leading-5 font-medium italic">fx</b><span class="ml-[34px] flex-1 text-left">图层样式</span><svg class="h-2 w-3"><use href="#chev"/></svg></button>
        </div>
      </div>
      <div class="mt-0.5 mr-px h-[730px] w-[3px] rounded bg-[#777]"></div>
    </div>
  </section>
</main>

<script>
// Ruler ticks: five-unit steps, a label every fifty units.
const STEP = 71.8;
function ruler(id, vertical, origin, length, hlFrom, hlTo) {
  let s = vertical
    ? `<rect x="0" y="${hlFrom}" width="17" height="${hlTo - hlFrom}" fill="#303030"/>`
    : `<rect x="${hlFrom}" y="0" width="${hlTo - hlFrom}" height="17" fill="#303030"/>`;
  for (let i = -60; i < 160; i++) {
    const p = Math.round(origin + i * STEP / 10);
    if (p < 0 || p > length) continue;
    const major = i % 10 === 0, mid = i % 5 === 0;
    const len = major ? 16 : mid ? 6 : 3;
    const col = major ? '#777' : '#686868', w = major || mid ? 2 : 1;
    s += vertical ? `<rect x="${16 - len}" y="${p}" width="${len}" height="${w}" fill="${col}"/>`
                  : `<rect x="${p}" y="${17 - len}" width="${w}" height="${len}" fill="${col}"/>`;
    if (major && p + 40 < length) {
      const t = String(i * 5);
      if (vertical) [...t].forEach((c, k) => s += `<text x="6" y="${p + 10 + k * 11}" text-anchor="middle" font-size="9" fill="#a0a0a0">${c}</text>`);
      else s += `<text x="${p + 3}" y="10" font-size="9" fill="#a0a0a0">${t}</text>`;
    }
  }
  document.getElementById(id).innerHTML = s;
}
ruler('hruler', false, 43, 1083, 249, 834);
ruler('vruler', true, 193, 985, 297, 509);
</script>
</body>
</html>
